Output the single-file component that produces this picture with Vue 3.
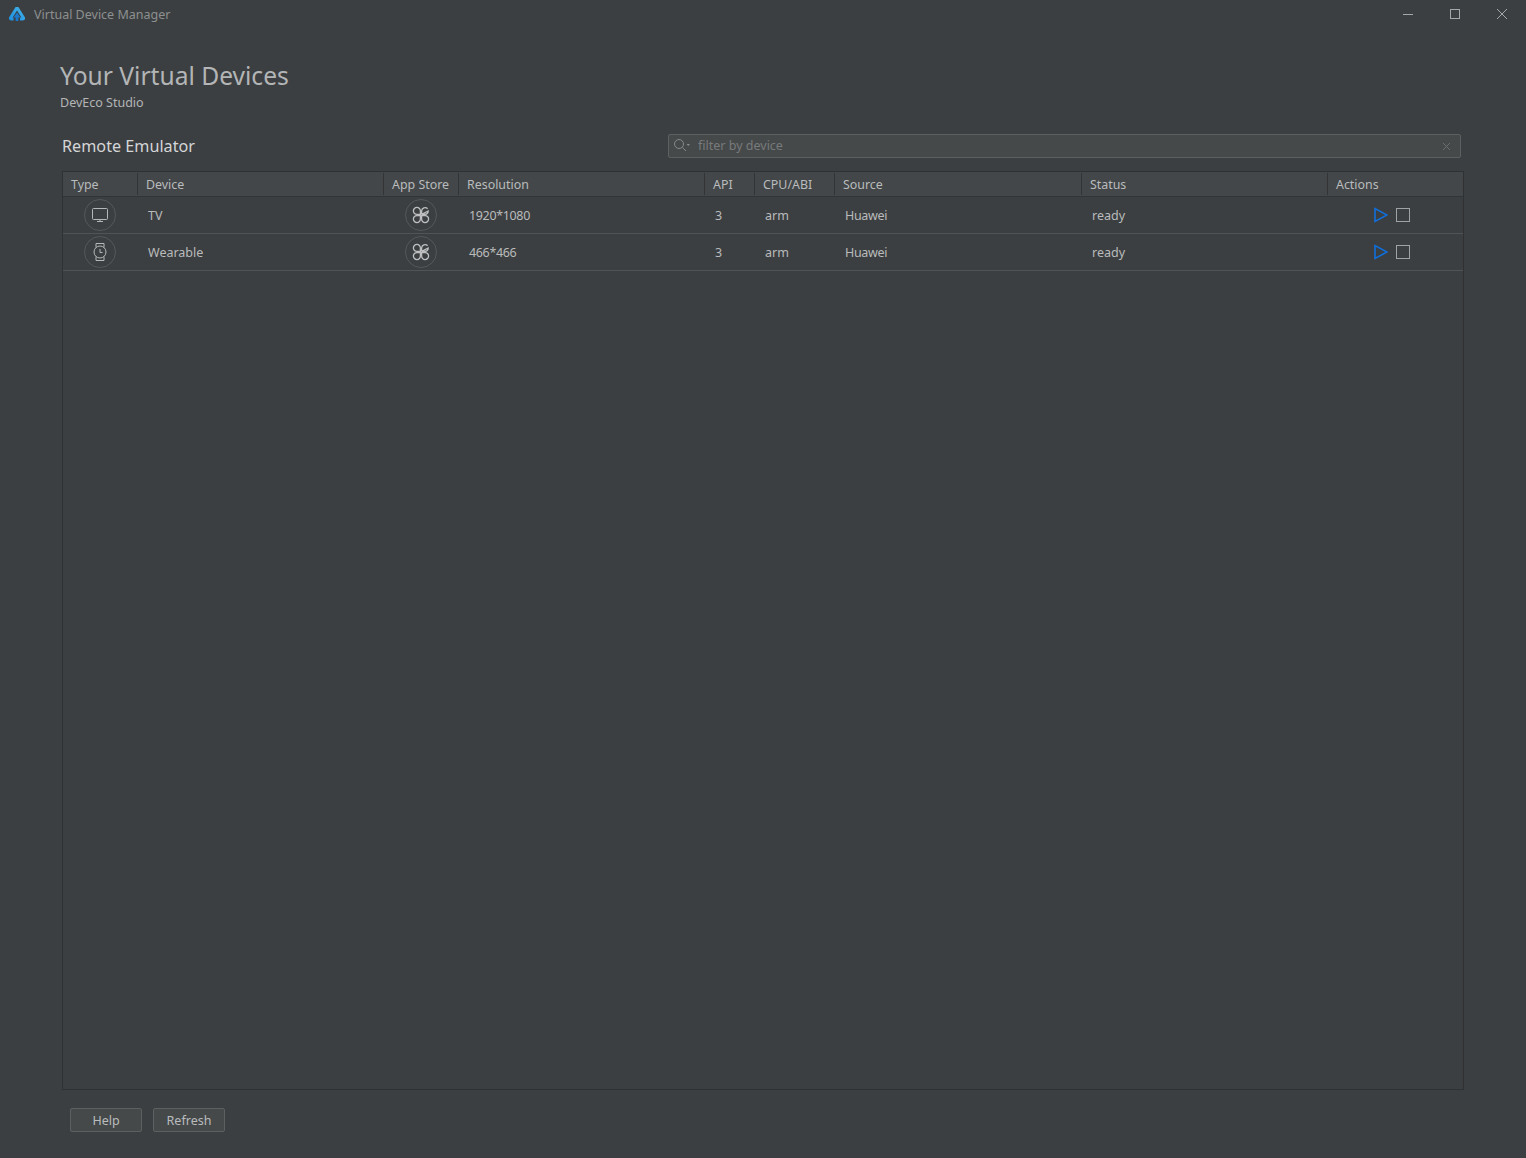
<script setup>
const columns = ['Type', 'Device', 'App Store', 'Resolution', 'API', 'CPU/ABI', 'Source', 'Status', 'Actions']
const rows = [
  { kind: 'tv', name: 'TV', resolution: '1920*1080' },
  { kind: 'watch', name: 'Wearable', resolution: '466*466' },
]
</script>

<template>
  <div class="window">
    <header class="titlebar">
      <svg class="logo" width="18" height="16" viewBox="0 0 18 16">
        <defs>
          <linearGradient id="lg" x1="0" y1="1" x2="1" y2="0">
            <stop offset="0" stop-color="#1d8fe0" />
            <stop offset="1" stop-color="#45b4ea" />
          </linearGradient>
        </defs>
        <path d="M7.6 1H10.4L17 11.6Q17.6 14 15 14.5H12V11.5H13.4L9 4.6L4.6 11.5H5.5V14.5H3Q0.4 14 1 11.6Z" fill="url(#lg)" />
        <path d="M9 6.6L12.6 11.5H10.4V15H7.6V11.5H5.4Z" fill="#1a77c9" />
      </svg>
      <span class="app-name">Virtual Device Manager</span>
      <div class="win-controls">
        <svg width="12" height="12" viewBox="0 0 12 12"><path d="M1 6.5H11" stroke="#a5a7a8" /></svg>
        <svg width="12" height="12" viewBox="0 0 12 12"><rect x="1.5" y="1.5" width="9" height="9" fill="none" stroke="#a5a7a8" /></svg>
        <svg width="12" height="12" viewBox="0 0 12 12"><path d="M1 1L11 11M11 1L1 11" stroke="#a5a7a8" /></svg>
      </div>
    </header>

    <main class="content">
      <h1 class="title">Your Virtual Devices</h1>
      <div class="subtitle">DevEco Studio</div>

      <div class="toolbar">
        <div class="section">Remote Emulator</div>
        <div class="search">
          <svg width="18" height="14" viewBox="0 0 18 14">
            <circle cx="6" cy="6" r="4.5" fill="none" stroke="#87898a" />
            <path d="M9.5 9.5L13 13" stroke="#87898a" />
            <path d="M13.5 6H17L15.25 8Z" fill="#87898a" />
          </svg>
          <span class="placeholder">filter by device</span>
          <svg class="clear" width="9" height="9" viewBox="0 0 9 9"><path d="M1 1L8 8M8 1L1 8" stroke="#6c6f70" /></svg>
        </div>
      </div>

      <section class="table">
        <div class="row head">
          <div v-for="c in columns" :key="c" class="th">{{ c }}</div>
        </div>
        <div v-for="r in rows" :key="r.name" class="row body">
          <div class="td center">
            <span class="ring">
              <svg v-if="r.kind === 'tv'" width="18" height="16" viewBox="0 0 18 16">
                <rect x="1.5" y="1.5" width="15" height="11" rx="1" fill="none" stroke="#b5b7b8" />
                <path d="M6 14.5H12M9 12.5V14.5" stroke="#b5b7b8" />
              </svg>
              <svg v-else width="16" height="20" viewBox="0 0 16 20">
                <circle cx="8" cy="10" r="6" fill="none" stroke="#b5b7b8" />
                <path d="M4 5.5V1.5H12V5.5M4 14.5V18.5H12V14.5" fill="none" stroke="#b5b7b8" />
                <path d="M8 7V10.5H10.5" fill="none" stroke="#b5b7b8" />
              </svg>
            </span>
          </div>
          <div class="td">{{ r.name }}</div>
          <div class="td center">
            <span class="ring">
              <svg width="18" height="18" viewBox="0 0 18 18" fill="none" stroke="#bdbfc0" stroke-width="1.3">
                <path d="M8.4 8.4H5A3.5 3.5 0 1 1 8.4 5Z" />
                <path d="M9.6 8.4V5A3.5 3.5 0 0 1 15.6 2.8M16.2 5A3.5 3.5 0 0 1 13 8.4H9.6Z" />
                <path d="M8.4 9.6H5A3.5 3.5 0 1 0 8.4 13Z" />
                <path d="M9.6 9.6H13A3.5 3.5 0 1 1 9.6 13Z" />
              </svg>
            </span>
          </div>
          <div class="td tight">{{ r.resolution }}</div>
          <div class="td">3</div>
          <div class="td">arm</div>
          <div class="td tight">Huawei</div>
          <div class="td">ready</div>
          <div class="td actions">
            <svg width="14" height="16" viewBox="0 0 14 16"><path d="M1 1.5V14.5L13 8Z" fill="none" stroke="#0f6fdc" stroke-width="1.6" /></svg>
            <span class="stop"></span>
          </div>
        </div>
      </section>

      <footer class="footer">
        <button class="btn" type="button">Help</button>
        <button class="btn" type="button">Refresh</button>
      </footer>
    </main>
  </div>
</template>

<style>
html, body { margin: 0; background: #3c3f41; }
</style>

<style scoped>
.window {
  width: 1526px;
  height: 1158px;
  display: flex;
  flex-direction: column;
  background: #3c3f41;
  color: #b9bbbc;
  font-family: "Noto Sans", "Open Sans", sans-serif;
  font-size: 12.5px;
  overflow: hidden;
}
.titlebar {
  height: 28px;
  flex: none;
  display: flex;
  align-items: center;
  padding-left: 8px;
}
.logo { margin-right: 8px; }
.app-name { color: #8d8f90; font-size: 12.5px; }
.win-controls {
  margin-left: auto;
  display: flex;
  gap: 35px;
  padding-right: 18px;
}
.content {
  flex: 1;
  display: flex;
  flex-direction: column;
  padding: 0 62px 0 60px;
}
.title {
  margin: 31px 0 0;
  font-size: 24.6px;
  line-height: 34px;
  font-weight: 400;
  color: #b3b5b6;
}
.subtitle { margin-top: 1px; line-height: 18px; color: #b3b5b6; }
.toolbar {
  display: flex;
  align-items: center;
  justify-content: space-between;
  margin: 21px 3px 0 2px;
  height: 26px;
}
.section { font-size: 16.2px; color: #d4d6d7; }
.search {
  width: 793px;
  height: 24px;
  box-sizing: border-box;
  border: 1px solid #5d6061;
  border-radius: 2px;
  background: #45494a;
  display: flex;
  align-items: center;
  padding: 0 9px 2px 4px;
}
.placeholder { margin-left: 7px; color: #787a7b; font-size: 12.5px; }
.clear { margin-left: auto; margin-top: 2px; }
.table {
  margin: 12px 0 0 2px;
  width: 1402px;
  height: 919px;
  box-sizing: border-box;
  border: 1px solid #2f3132;
}
.row {
  display: grid;
  grid-template-columns: 74px 246px 75px 246px 50px 80px 247px 246px 136px;
}
.head {
  height: 25px;
  box-sizing: border-box;
  background: #434749;
  border-bottom: 1px solid #323436;
  align-items: stretch;
}
.th {
  display: flex;
  align-items: center;
  padding-left: 8px;
  margin: 1px 0;
  border-left: 1px solid #323436;
  white-space: nowrap;
  font-size: 12.4px;
}
.th:first-child { border-left: 0; }
.body {
  height: 37px;
  box-sizing: border-box;
  border-bottom: 1px solid #515456;
  align-items: center;
}
.td { padding-left: 11px; white-space: nowrap; color: #b9bbbc; }
.td.center { padding-left: 0; display: flex; justify-content: center; }
.tight { letter-spacing: -0.35px; }
.ring {
  width: 32px;
  height: 32px;
  box-sizing: border-box;
  border: 1px solid #555859;
  border-radius: 50%;
  display: flex;
  align-items: center;
  justify-content: center;
}
.actions {
  display: flex;
  align-items: center;
  gap: 8px;
  padding-left: 47px;
}
.stop {
  width: 14px;
  height: 14px;
  box-sizing: border-box;
  border: 1px solid #a0a2a3;
}
.footer {
  display: flex;
  gap: 11px;
  margin: 18px 0 0 10px;
}
.btn {
  width: 72px;
  height: 24px;
  padding: 0;
  box-sizing: border-box;
  border: 1px solid #5d6061;
  border-radius: 2px;
  background: #45494a;
  color: #b9bbbc;
  font: inherit;
}
</style>
